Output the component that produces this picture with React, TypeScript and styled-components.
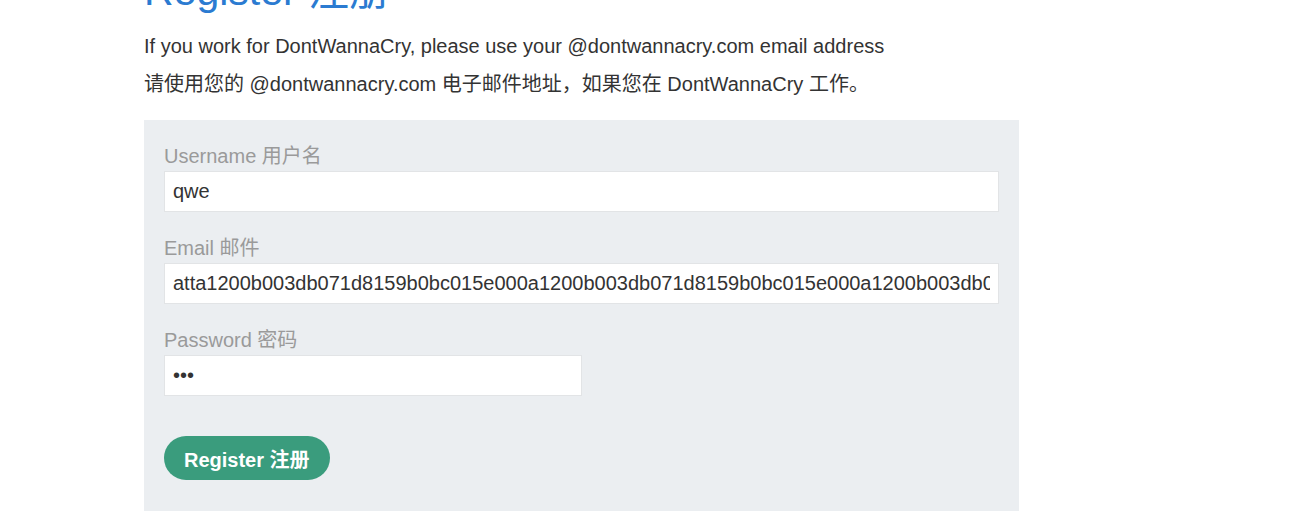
import styled, { createGlobalStyle } from 'styled-components';

const GlobalStyle = createGlobalStyle`
  html, body {
    margin: 0;
    padding: 0;
    background: #ffffff;
    overflow: hidden;
  }
  body {
    font-family: "Liberation Sans", Arial, "Noto Sans CJK SC", sans-serif;
    color: #333333;
  }
`;

const Page = styled.div`
  padding-left: 144px;
  width: 875px;
`;

const Title = styled.h1`
  margin: -32px 0 0;
  font-size: 41px;
  line-height: 46px;
  font-weight: 400;
  color: #2b7bd1;
`;

const Intro = styled.p`
  margin: 0;
  font-size: 20px;
  line-height: 38px;
  color: #333333;

  &:first-of-type {
    margin-top: 13px;
  }
`;

const FormBox = styled.form`
  margin-top: 17px;
  background: #ebeef1;
  padding: 25px 20px 40px;
  display: flex;
  flex-direction: column;
`;

const Field = styled.div`
  display: flex;
  flex-direction: column;
  margin-bottom: 25px;
`;

const Label = styled.label`
  font-size: 20px;
  line-height: 22px;
  color: #9a9a9a;
  margin-bottom: 4px;
`;

const Input = styled.input<{ $half?: boolean }>`
  box-sizing: border-box;
  height: 41px;
  width: ${({ $half }) => ($half ? '418px' : '100%')};
  border: 1px solid #e2e4e6;
  background: #ffffff;
  padding: 0 8px;
  font-family: "Liberation Sans", Arial, "Noto Sans CJK SC", sans-serif;
  font-size: 20px;
  color: #333333;
  outline: none;
`;

const Button = styled.button`
  align-self: flex-start;
  margin-top: 15px;
  height: 44px;
  padding: 0 20px;
  border: none;
  border-radius: 22px;
  background: #3a9c7d;
  color: #ffffff;
  font-family: "Liberation Sans", Arial, "Noto Sans CJK SC", sans-serif;
  font-size: 20px;
  font-weight: 700;
  cursor: pointer;
`;

const emailValue =
  'atta1200b003db071d8159b0bc015e000a1200b003db071d8159b0bc015e000a1200b003db071d8159b0bc015e000a1200b003db071d8159b0bc015e000@dontwannacry.com';

export default function App() {
  return (
    <>
      <GlobalStyle />
      <Page>
        <Title>Register 注册</Title>
        <Intro>If you work for DontWannaCry, please use your @dontwannacry.com email address</Intro>
        <Intro>请使用您的 @dontwannacry.com 电子邮件地址，如果您在 DontWannaCry 工作。</Intro>
        <FormBox onSubmit={(e) => e.preventDefault()}>
          <Field>
            <Label htmlFor="username">Username 用户名</Label>
            <Input id="username" defaultValue="qwe" />
          </Field>
          <Field>
            <Label htmlFor="email">Email 邮件</Label>
            <Input id="email" defaultValue={emailValue} />
          </Field>
          <Field>
            <Label htmlFor="password">Password 密码</Label>
            <Input id="password" type="password" defaultValue="qwe" $half />
          </Field>
          <Button type="submit">Register 注册</Button>
        </FormBox>
      </Page>
    </>
  );
}
